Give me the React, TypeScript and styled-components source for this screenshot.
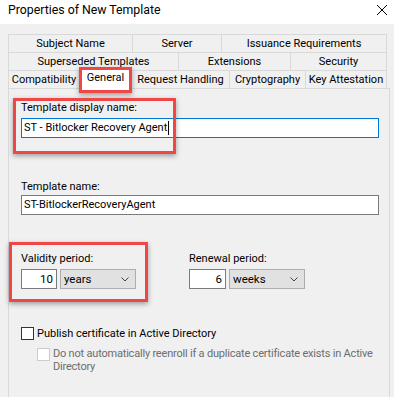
import React from "react";
import styled, { createGlobalStyle } from "styled-components";

const Global = createGlobalStyle`
  html, body { margin: 0; padding: 0; background: #f0f0f0; }
  body {
    font-family: Roboto, "Liberation Sans", sans-serif;
    font-size: 11px;
    color: #000;
  }
  * { box-sizing: border-box; }
`;

const Window = styled.div`
  position: relative;
  width: 394px;
  height: 397px;
  overflow: hidden;
  background: #f0f0f0;
`;

const TitleBar = styled.div`
  height: 24px;
  background: #fff;
  display: flex;
  justify-content: space-between;
  align-items: flex-start;
  padding: 2px 6px 0 8px;
`;

const Title = styled.div`
  line-height: 16px;
  font-size: 12.3px;
`;

const CloseBtn = styled.svg`
  margin-top: 2px;
  width: 12px;
  height: 12px;
`;

const Body = styled.div`
  padding: 10px 0 0 8px;
`;

const TabRow = styled.div`
  display: flex;
  align-items: flex-start;
  height: 19px;
  & + & { margin-top: -1px; }
`;

const Tab = styled.div<{ $w: number; $active?: boolean }>`
  flex: none;
  width: ${(p) => p.$w}px;
  height: ${(p) => (p.$active ? 22 : 19)}px;
  margin-top: ${(p) => (p.$active ? -2 : 0)}px;
  position: relative;
  z-index: ${(p) => (p.$active ? 2 : 1)};
  border: 1px solid #d9d9d9;
  border-bottom: ${(p) => (p.$active ? "none" : "1px solid #d9d9d9")};
  background: ${(p) => (p.$active ? "#fff" : "#f0f0f0")};
  display: flex;
  justify-content: center;
  align-items: ${(p) => (p.$active ? "flex-start" : "center")};
  padding-top: ${(p) => (p.$active ? 1 : 0)}px;
  line-height: 16px;
  white-space: nowrap;
  & + & { margin-left: -1px; }
`;

const Panel = styled.div`
  margin-top: -1px;
  width: 382px;
  height: 320px;
  border: 1px solid #d9d9d9;
  background: #f0f0f0;
  padding: 11px 10px 0 12px;
  display: flex;
  flex-direction: column;
`;

const Label = styled.div<{ $mt?: number }>`
  line-height: 16px;
  margin-top: ${(p) => p.$mt ?? 0}px;
`;

const TextBox = styled.div<{ $focused?: boolean; $mt?: number }>`
  height: 20px;
  margin-top: ${(p) => p.$mt ?? 0}px;
  background: #fff;
  border: 1px solid ${(p) => (p.$focused ? "#0078d7" : "#7a7a7a")};
  display: flex;
  align-items: center;
  padding-left: 2px;
  line-height: 16px;
  white-space: nowrap;
`;

const Caret = styled.span`
  display: inline-block;
  width: 1px;
  height: 14px;
  background: #000;
  margin-left: 1px;
`;

const PeriodGrid = styled.div`
  margin-top: 36px;
  display: grid;
  grid-template-columns: 168px auto;
`;

const PeriodGroup = styled.div`
  display: flex;
  flex-direction: column;
`;

const PeriodControls = styled.div`
  display: flex;
  gap: 3px;
  margin-top: 2px;
`;

const NumberBox = styled.div<{ $w: number }>`
  width: ${(p) => p.$w}px;
  height: 20px;
  background: #fff;
  border: 1px solid #7a7a7a;
  display: flex;
  align-items: center;
  justify-content: flex-end;
  padding-right: 3px;
  line-height: 16px;
  font-size: 11.5px;
`;

const Select = styled.div`
  width: 76px;
  height: 20px;
  background: #e1e1e1;
  border: 1px solid #adadad;
  display: flex;
  align-items: center;
  justify-content: space-between;
  padding: 0 6px 0 3px;
  line-height: 16px;
  font-size: 11.5px;
`;

const Chevron = styled.svg`
  width: 8px;
  height: 5px;
`;

const CheckRow = styled.div<{ $indent?: number; $mt?: number; $disabled?: boolean }>`
  display: flex;
  align-items: flex-start;
  gap: 3px;
  margin-left: ${(p) => p.$indent ?? 0}px;
  margin-top: ${(p) => p.$mt ?? 0}px;
  color: ${(p) => (p.$disabled ? "#6d6d6d" : "#000")};
  letter-spacing: ${(p) => (p.$disabled ? "-0.2px" : "normal")};
`;

const CheckBox = styled.div<{ $disabled?: boolean }>`
  flex: none;
  width: 13px;
  height: 13px;
  margin-top: 1px;
  background: #fff;
  border: 1px solid ${(p) => (p.$disabled ? "#cccccc" : "#333")};
`;

const CheckText = styled.div<{ $lh?: number }>`
  line-height: ${(p) => p.$lh ?? 16}px;
  white-space: nowrap;
`;

const Annotation = styled.div<{ $x: number; $y: number; $w: number; $h: number }>`
  position: absolute;
  left: ${(p) => p.$x}px;
  top: ${(p) => p.$y}px;
  width: ${(p) => p.$w}px;
  height: ${(p) => p.$h}px;
  border: 3px solid #ef4646;
  box-shadow: 0 2px 5px rgba(0, 0, 0, 0.35);
  z-index: 5;
  pointer-events: none;
`;

const rows: { label: string; w: number; active?: boolean }[][] = [
  [
    { label: "Subject Name", w: 125 },
    { label: "Server", w: 90 },
    { label: "Issuance Requirements", w: 166 },
  ],
  [
    { label: "Superseded Templates", w: 171 },
    { label: "Extensions", w: 113 },
    { label: "Security", w: 97 },
  ],
  [
    { label: "Compatibility", w: 72 },
    { label: "General", w: 53, active: true },
    { label: "Request Handling", w: 99 },
    { label: "Cryptography", w: 77 },
    { label: "Key Attestation", w: 82 },
  ],
];

const ChevronIcon = () => (
  <Chevron viewBox="0 0 8 5">
    <path d="M0.5 0.5 L4 4 L7.5 0.5" fill="none" stroke="#444" strokeWidth="1" />
  </Chevron>
);

export default function App() {
  return (
    <Window>
      <Global />
      <TitleBar>
        <Title>Properties of New Template</Title>
        <CloseBtn viewBox="0 0 12 12">
          <path d="M1 1 L11 11 M11 1 L1 11" stroke="#000" strokeWidth="1" />
        </CloseBtn>
      </TitleBar>
      <Body>
        {rows.map((row, i) => (
          <TabRow key={i}>
            {row.map((t) => (
              <Tab key={t.label} $w={t.w} $active={t.active}>
                {t.label}
              </Tab>
            ))}
          </TabRow>
        ))}
        <Panel>
          <Label>Template display name:</Label>
          <TextBox $focused $mt={2}>
            ST - Bitlocker Recovery Agent
            <Caret />
          </TextBox>
          <Label $mt={41}>Template name:</Label>
          <TextBox>ST-BitlockerRecoveryAgent</TextBox>
          <PeriodGrid>
            <PeriodGroup>
              <Label>Validity period:</Label>
              <PeriodControls>
                <NumberBox $w={36}>10</NumberBox>
                <Select>
                  <span>years</span>
                  <ChevronIcon />
                </Select>
              </PeriodControls>
            </PeriodGroup>
            <PeriodGroup>
              <Label>Renewal period:</Label>
              <PeriodControls>
                <NumberBox $w={37}>6</NumberBox>
                <Select>
                  <span>weeks</span>
                  <ChevronIcon />
                </Select>
              </PeriodControls>
            </PeriodGroup>
          </PeriodGrid>
          <CheckRow $mt={37}>
            <CheckBox />
            <CheckText>Publish certificate in Active Directory</CheckText>
          </CheckRow>
          <CheckRow $indent={16} $mt={5} $disabled>
            <CheckBox $disabled />
            <CheckText $lh={13}>
              Do not automatically reenroll if a duplicate certificate exists in Active
              <br />
              Directory
            </CheckText>
          </CheckRow>
        </Panel>
      </Body>
      <Annotation $x={79} $y={67} $w={53} $h={26} />
      <Annotation $x={13} $y={98} $w={163} $h={56} />
      <Annotation $x={9} $y={242} $w={139} $h={60} />
    </Window>
  );
}
